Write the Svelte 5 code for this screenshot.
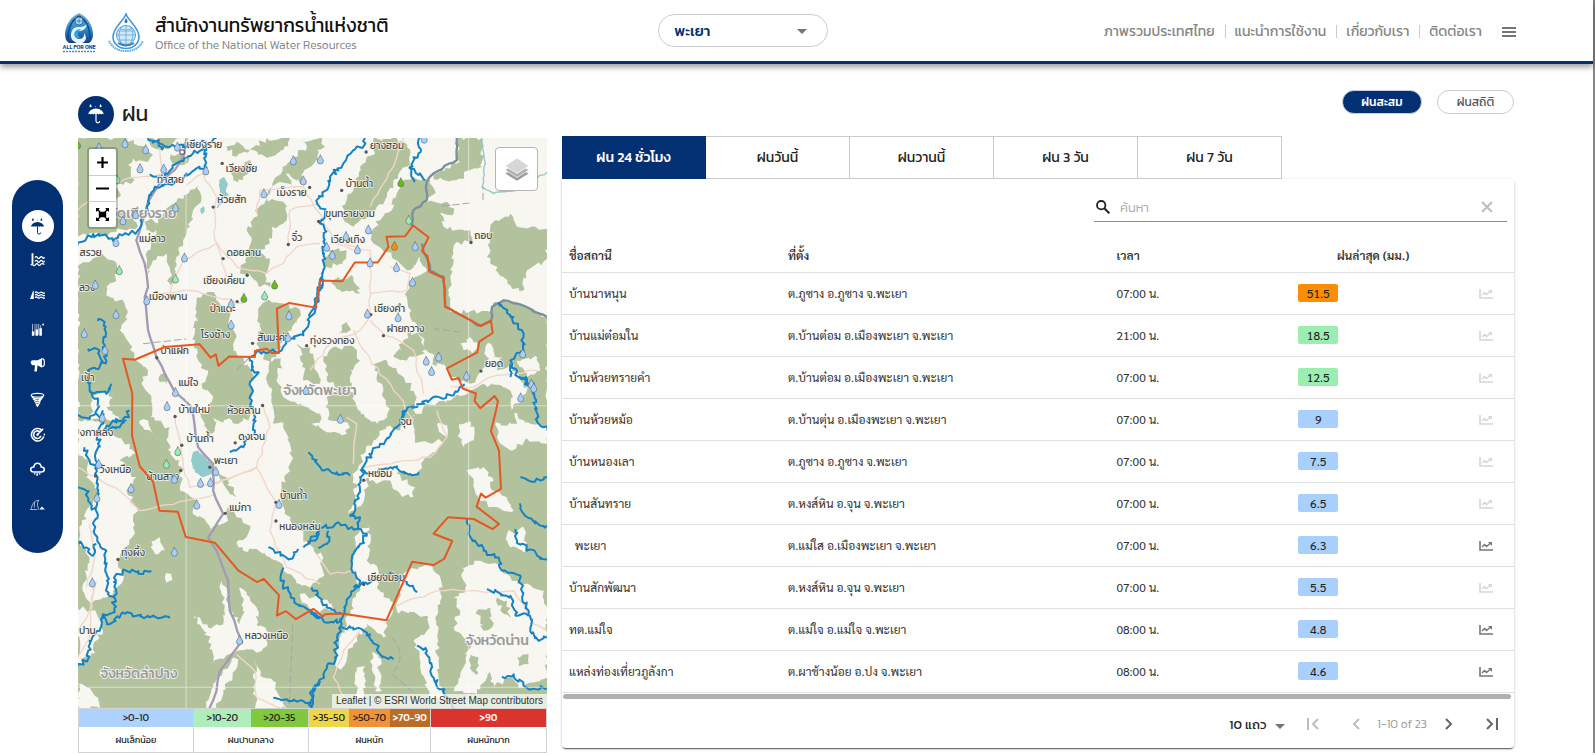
<script>
  const navLinks = ['ภาพรวมประเทศไทย', 'แนะนำการใช้งาน', 'เกี่ยวกับเรา', 'ติดต่อเรา'];
  const menu = ['ฝน', 'ระดับน้ำ', 'เขื่อน', 'คุณภาพน้ำ', 'ประกาศเตือน', 'พายุ', 'เรดาร์', 'คาดการณ์ฝน', 'คลื่น'];
  const tabs = ['ฝน 24 ชั่วโมง', 'ฝนวันนี้', 'ฝนวานนี้', 'ฝน 3 วัน', 'ฝน 7 วัน'];
  let activeTab = $state(0);
  let query = $state('');

  const rows = [
    { name: 'บ้านนาหนุน', place: 'ต.ภูซาง อ.ภูซาง จ.พะเยา', time: '07:00 น.', rain: '51.5', level: 'heavy', chart: false },
    { name: 'บ้านแม่ต๋อมใน', place: 'ต.บ้านต๋อม อ.เมืองพะเยา จ.พะเยา', time: '21:00 น.', rain: '18.5', level: 'medium', chart: false },
    { name: 'บ้านห้วยทรายคำ', place: 'ต.บ้านต๋อม อ.เมืองพะเยา จ.พะเยา', time: '07:00 น.', rain: '12.5', level: 'medium', chart: false },
    { name: 'บ้านห้วยหม้อ', place: 'ต.บ้านตุ่น อ.เมืองพะเยา จ.พะเยา', time: '07:00 น.', rain: '9', level: 'light', chart: false },
    { name: 'บ้านหนองเลา', place: 'ต.ภูซาง อ.ภูซาง จ.พะเยา', time: '07:00 น.', rain: '7.5', level: 'light', chart: false },
    { name: 'บ้านสันทราย', place: 'ต.หงส์หิน อ.จุน จ.พะเยา', time: '07:00 น.', rain: '6.5', level: 'light', chart: false },
    { name: '\u00a0 พะเยา', place: 'ต.แม่ใส อ.เมืองพะเยา จ.พะเยา', time: '07:00 น.', rain: '6.3', level: 'light', chart: true },
    { name: 'บ้านสักพัฒนา', place: 'ต.หงส์หิน อ.จุน จ.พะเยา', time: '07:00 น.', rain: '5.5', level: 'light', chart: false },
    { name: 'ทต.แม่ใจ', place: 'ต.แม่ใจ อ.แม่ใจ จ.พะเยา', time: '08:00 น.', rain: '4.8', level: 'light', chart: true },
    { name: 'แหล่งท่องเที่ยวภูลังกา', place: 'ต.ผาช้างน้อย อ.ปง จ.พะเยา', time: '08:00 น.', rain: '4.6', level: 'light', chart: true }
  ];

  // Adds small repeatable bends to a coarse line so that coasts and rivers look natural.
  function rough(points, amp, step, closed) {
    const p = points.split(' ').map((s) => s.split(',').map(Number));
    let seed = Math.abs(Math.round(p[0][0] * 31 + p[0][1] * 17 + p.length * 7)) + 1;
    const rnd = () => {
      seed = (seed * 16807) % 2147483647;
      return seed / 2147483647 - 0.5;
    };
    const out = [];
    const last = closed ? p.length : p.length - 1;
    for (let i = 0; i < last; i++) {
      const a = p[i];
      const b = p[(i + 1) % p.length];
      const n = Math.max(1, Math.round(Math.hypot(b[0] - a[0], b[1] - a[1]) / step));
      out.push(a);
      for (let k = 1; k < n; k++) {
        out.push([a[0] + ((b[0] - a[0]) * k) / n + rnd() * amp, a[1] + ((b[1] - a[1]) * k) / n + rnd() * amp]);
      }
    }
    if (!closed) out.push(p[p.length - 1]);
    return 'M' + out.map((q) => q.map((v) => v.toFixed(0)).join(' ')).join('L') + (closed ? 'Z' : '');
  }

  // The map is described in four quarters, each with its own origin.
  const quarters = [
    {
      x: 0, y: 840,
      base: [24, 20, 700, 900],
      land: ['225,-30 255,30 300,50 295,120 335,170 330,230 380,270 370,310 410,335 425,365 440,340 475,330 475,280 500,320 540,345 530,380 500,395 520,420 560,415 620,450 640,480 700,520 750,545 750,385 680,360 645,300 635,230 665,150 660,100 640,20 620,-30', '24,30 60,0 100,40 140,80 180,100 200,130 150,150 200,200 170,240 200,290 195,370 150,440 160,510 110,560 60,580 40,520 60,440 30,380 50,300 90,250 50,200 60,150 24,120', '245,390 270,380 285,420 255,430', '285,500 305,490 310,515 290,515', '455,510 470,530 480,600 510,640 520,590 510,530 560,590 560,640 605,665 575,720 500,720 430,755 425,700 370,610 415,650 440,640 460,640', '430,830 490,740 505,745 440,894 410,894', '24,590 80,600 100,660 60,740 24,760', '555,745 580,800 610,810 640,870 650,894 555,894', '24,810 60,830 90,880 90,894 24,894', '205,-20 235,30 250,70 220,50 210,20'],
      green: ['395,-10 430,20 435,60 415,70 400,30', '480,-10 525,-10 520,30 495,40 485,20', '555,415 620,450 640,480 610,490 520,440', '440,180 470,200 500,260 480,250']
    },
    {
      x: 720, y: 840,
      base: [-20, 10, 731, 890],
      land: ['-20,-30 65,-30 95,5 120,50 95,75 50,65 -20,30', '150,-25 235,-25 235,15 200,40 165,20', '130,200 160,130 190,90 240,45 270,60 285,-10 315,-10 315,98 365,100 385,85 400,95 340,150 320,190 260,190 315,230 310,260 270,250 240,210 200,220 175,200 165,250 140,290 115,310 140,230', '380,-10 420,-10 410,80 385,60', '435,20 480,-10 490,90 460,110', '470,180 520,170 545,200 540,230 590,260 610,300 540,290 510,270 490,220', '570,100 600,120 650,85 711,100 711,50 660,40 640,20 620,-20 555,-20 560,80', '145,350 175,350 180,400 170,450 205,480 200,530 240,570 250,600 220,680 170,640 130,700 95,780 75,760 100,650 120,600 150,540 125,470', '280,490 350,460 390,500 395,560 375,620 380,700 385,800 400,860 360,860 330,760 310,690 350,660 355,620 260,600', '455,470 510,450 560,460 580,490 635,520 700,540 711,590 711,800 640,830 600,800 550,830 540,780 500,850 430,840 450,800 480,690 430,650 450,600 430,560 465,540', '-30,390 10,410 40,440 35,500 0,530 -30,510', '-30,550 30,560 80,600 0,600', '590,370 640,350 650,420 600,410', '140,770 165,765 160,860 135,880', '185,720 205,740 215,840 195,840'],
      green: ['500,600 540,590 545,650 520,660', '620,740 655,730 655,760 625,765', '480,730 505,740 500,790 485,780', '560,560 590,570 600,620 570,600']
    },
    {
      x: 0, y: 0,
      land: [],
      green: ['24,24 170,24 230,50 250,75 235,95 190,85 175,105 195,150 160,165 140,160 150,200 130,240 190,262 205,290 140,305 110,318 60,310 24,320', '24,410 60,395 90,375 130,390 150,430 110,470 120,500 165,520 175,545 150,600 180,640 200,690 235,720 215,760 245,800 240,870 24,870', '385,165 395,200 370,240 360,290 340,330 320,380 310,440 298,475 300,420 290,370 250,390 235,430 230,380 240,330 260,300 230,300 225,270 245,265 265,280 290,235 330,205', '240,24 330,24 300,45 270,60 245,50', '300,85 330,70 360,80 350,100 310,100', '470,50 500,35 540,60 590,24 660,24 640,60 600,80 540,60 500,80', '480,120 540,90 540,120 520,150 490,150', '700,60 740,50 750,90 700,120 690,160 650,130 665,170 620,160 590,200 600,175 650,105', '590,205 640,215 650,250 640,280 605,290 600,340 570,360 600,385 585,430 600,470 570,470 545,440 510,430 530,380 545,330 530,300 560,260 555,240', '380,520 400,490 430,485 450,520 480,540 475,580 500,620 490,660 520,680 545,720 545,800 535,870 400,870 430,800 395,760 415,720 385,690 375,610', '565,535 600,510 640,520 690,540 665,600 630,640 620,680 590,690 560,640 575,600', '600,690 640,680 620,750 640,800 690,820 750,850 750,880 610,880 605,800 590,740', '680,640 720,650 750,760 700,750 700,700', '270,735 290,730 290,760 270,755']
    },
    {
      x: 720, y: 0,
      land: [],
      green: ['-20,30 30,24 45,50 20,70 -10,60', '190,24 260,24 300,60 290,110 250,150 230,200 200,230 180,260 130,290 95,260 110,200 140,160 150,110 195,70', '280,150 310,140 360,150 375,190 350,215 410,215 430,250 390,250 400,290 480,300 485,340 440,335 430,370 420,440 420,545 540,545 550,515 620,515 711,560 711,870 640,870 600,840 640,760 600,700 560,720 575,680 530,690 500,740 480,760 420,740 400,700 370,690 340,640 300,560 290,500 300,450 350,420 330,380 300,420 270,400 245,380 190,340 180,310 210,270 245,240 260,190', '370,130 440,100 440,24 515,24 515,110 480,120 440,150 380,150', '540,290 560,270 600,250 620,290 711,300 711,385 650,420 640,480 600,465 540,400 530,380 540,360 530,310', '40,690 70,650 130,650 150,690 120,720 130,800 150,850 140,870 60,870 50,800 75,770 50,740', '190,700 230,690 280,740 320,800 310,870 240,870 220,780', '250,680 300,600 330,620 345,670 290,690', '380,650 410,640 395,700 365,700', '340,830 470,790 520,760 600,780 620,880 330,880', '40,390 70,360 110,360 100,400 50,410', '60,450 130,440 150,490 90,480', '95,590 115,570 120,600 85,610']
    }
  ];
  const clearings = ['1170,640 1200,620 1220,650 1205,670 1180,660', '1340,690 1400,680 1410,720 1370,740', '1245,650 1262,640 1270,680 1250,680', '75,790 100,780 130,800 110,830 150,870 60,870 65,830', '1330,780 1370,770 1360,810 1320,820'];

  const roads = [
    '350,165 400,130 440,200 435,330 500,410 590,430 640,400 680,350 750,340', '24,240 160,150 280,130 270,60 250,24', '235,500 340,480 400,490 520,520', '300,490 340,390 440,340 470,440', '560,250 570,180 700,170 800,340 850,360', '655,340 660,240 750,220', '820,340 900,360 900,560 870,600 780,640 720,720', '900,490 1010,480 1020,430 960,410', '900,570 930,600 1030,660 1060,790', '850,600 905,700 960,760 1030,870', '900,230 970,110 1000,24', '316,860 340,1010 360,1070 440,1060 560,1010 600,890 580,820', '430,1060 560,1010 618,1115 600,1200 650,1310 750,1360', '24,1010 150,1080 210,1140 350,1110 440,1090', '50,1370 75,1280 60,1180', '500,1570 555,1620 560,1700 640,1735', '24,1580 60,1520 70,1360', '850,1000 860,880 830,860', '880,1010 1000,990 1080,980 1130,920 1100,840', '870,1500 820,1560 790,1640 830,1720', '980,1425 1100,1380 1330,1380 1390,1480 1431,1500', '1140,770 1210,770 1260,740 1400,720', '24,1500 60,1440 80,1350', '740,1270 780,1330 860,1320'
  ];
  const highway = ['350,24 345,70 315,120 270,160 235,215 215,285 200,330 225,400 235,470 225,500 235,600 260,680 315,785 365,830 385,950 430,1000 430,1080 460,1150 415,1220 440,1260 475,1350 480,1440 515,1530 450,1620 440,1680 418,1734'];
  const borderRivers = ['1160,24 1160,90 1090,130 1070,155 1070,210 1030,240 1025,290', '1055,340 1080,420 1120,440 1125,530 1231,587 1262,570 1265,530 1300,510 1340,520 1431,560'];
  const rivers = [
    '24,345 55,315 110,315 130,332 150,312 200,308 215,285 235,215 255,170 330,150 380,115 410,112 405,60 440,24', '240,135 280,145 320,100 370,70 410,50', '235,24 270,40 320,50 410,38', '270,30 275,60', '755,440 745,500 720,560 700,615 650,620 635,660 560,665 540,690 545,720 565,725 540,755 550,870 555,900 520,950 480,965', '85,572 105,575 100,650 110,690 80,715 55,720 60,780 85,815 80,850 100,870', '55,655 90,660 95,700', '60,780 110,790 125,760', '24,850 60,865 80,850', '170,870 130,870 100,900',
    '885,24 880,50 850,60 820,100 780,140 770,180 740,210 765,250 750,280 765,300 760,420 750,480 725,560', '1050,24 1045,70 1020,110 1065,150', '1020,110 1030,155', '1285,515 1320,560 1360,610 1360,660 1320,690 1345,740 1390,760 1400,870 1431,900', '1320,700 1320,740', '1345,740 1375,765', '995,870 1010,835 1070,810 1150,795 1180,760', '1462,180 1450,200',
    '100,840 85,940 80,1000 85,1060 80,1130 75,1210 90,1240 110,1260 115,1390 135,1400 130,1445 100,1450 90,1500 60,1530 55,1585 24,1605', '24,1070 50,1080 65,1130 80,1130', '30,1230 70,1275 80,1240', '135,1400 140,1330 170,1320 220,1330 245,1320', '100,1450 120,1480 160,1445 200,1455 300,1462', '180,840 150,890 100,900', '45,950 60,990 85,1015', '595,1250 620,1265 660,1285 685,1255', '700,1250 735,1230 745,1200', '640,1310 632,1350 680,1420 750,1460', '715,965 760,1020 800,1025 840,1035', '610,1700 650,1705 700,1710 725,1730 725,1680 750,1650', '725,1370 770,1430 815,1450',
    '1010,840 990,880 930,940 890,990 870,1040 855,1140 840,1155 870,1160 860,1195 890,1215 870,1240 850,1270 845,1305 870,1350 850,1380 825,1430 815,1480 800,1520 795,1580 760,1630 730,1670 720,1720', '870,1020 920,1025 970,1010 1020,1030 1045,1025', '860,1195 810,1180 760,1190 720,1230', '775,1200 770,1240 745,1252', '850,1370 920,1345 970,1330 1010,1360 1040,1385', '1190,1165 1195,1210 1240,1260 1285,1280 1295,1320 1350,1335 1355,1400 1375,1440 1380,1490 1405,1530 1431,1520', '1250,1375 1320,1395 1335,1450 1375,1455', '1350,1040 1380,1052 1431,1040', '1348,1118 1360,1150 1410,1185 1431,1185', '1335,1195 1340,1230 1400,1275 1431,1285', '1040,1545 1070,1560 1090,1640 1130,1700 1150,1731', '720,1440 770,1475 815,1470', '810,1490 840,1490 900,1510 930,1570 970,1585', '1295,1637 1330,1630 1375,1675 1431,1670'
  ];
  const lakes = ['448,150 462,140 474,160 468,185 478,195 460,205 450,185', '370,965 385,960 430,1005 430,1030 400,1040 375,1025 363,990', '392,235 402,228 404,245 396,252', '440,235 452,212 456,222'];
  const boundary = '160,685 195,688 285,650 390,642 422,682 438,672 446,706 478,678 555,680 555,662 590,655 605,668 627,668 621,535 658,518 737,532 751,451 817,453 854,397 923,397 955,350 949,320 1005,318 1029,286 1075,321 1055,362 1072,378 1077,424 1121,444 1124,528 1231,587 1262,572 1267,608 1227,634 1221,666 1130,714 1145,748 1165,743 1177,774 1217,789 1213,812 1230,833 1273,797 1283,812 1277,840 1262,902 1286,960 1292,1075 1246,1101 1232,1089 1219,1128 1286,1180 1267,1195 1210,1165 1133,1160 1090,1209 1146,1231 1122,1284 1090,1303 1026,1293 949,1468 815,1448 765,1450 758,1457 730,1434 678,1465 648,1441 621,1454 627,1393 581,1344 562,1354 505,1319 435,1236 348,1219 324,1143 269,1140 250,1053 210,1007 187,916 188,790';

  const towns = [
    ['เชียงราย', 350, 55], ['เวียงชัย', 468, 125], ['ท่าสาย', 262, 158], ['เม็งราย', 620, 198], ['ห้วยสัก', 442, 220], ['แม่ลาว', 208, 334], ['จิ๋ว', 665, 332], ['ดอยลาน', 470, 376], ['เชียงเคี่ยน', 400, 462], ['เมืองพาน', 238, 508], ['ป่าแดะ', 420, 545], ['โรงช้าง', 393, 623], ['สันมะค่า', 562, 632], ['ทุ่งรวงทอง', 720, 640], ['ป่าแฝก', 272, 671], ['แม่ใจ', 326, 767], ['บ้านใหม่', 326, 847], ['ห้วยลาน', 472, 852],
    ['ยางฮอม', 900, 58], ['บ้านต้ำ', 827, 172], ['ขุนทรายงาม', 766, 262], ['เวียงเทิง', 782, 337], ['ถอบ', 1212, 326], ['เชียงคำ', 912, 545], ['ฝายกวาง', 950, 606], ['ยอด', 1244, 710], ['จุน', 990, 884],
    ['บ้านถ้ำ', 350, 935], ['ดงเจน', 505, 928], ['พะเยา', 432, 1000], ['วังเหนือ', 90, 1026], ['บ้านสาง', 230, 1048], ['แม่กา', 478, 1140], ['บ้านถ้ำ', 630, 1105], ['หนองหล่ม', 628, 1197], ['ทุ่งผึ้ง', 155, 1276], ['หลวงเหนือ', 525, 1524], ['หม่อม', 894, 1040], ['เชียงม่วน', 892, 1352],
    ['สรวย', 30, 376], ['ลวง', 28, 482], ['เป้า', 34, 752], ['งกาหลง', 30, 915], ['ปาน', 28, 1510]
  ];
  const provinces = [['หวัดเชียงราย', 96, 264], ['จังหวัดพะเยา', 640, 795], ['จังหวัดลำปาง', 92, 1642], ['จังหวัดน่าน', 1186, 1542]];
  const dots = [[457, 100], [430, 231], [719, 172], [655, 343], [460, 385], [532, 435], [502, 514], [548, 639], [710, 646], [261, 682], [316, 858], [578, 825], [888, 66], [815, 181], [746, 274], [1202, 337], [902, 553], [940, 616], [1232, 722], [336, 944], [496, 937], [420, 1010], [78, 1036], [333, 1020], [466, 1148], [618, 1115], [618, 1171], [145, 1286], [515, 1533], [881, 1049], [881, 1361]];

  const stations = {
    light: [[88, 52], [166, 40], [228, 58], [323, 50], [211, 115], [282, 116], [408, 121], [670, 91], [700, 151], [582, 190], [317, 232], [198, 253], [160, 271], [139, 336], [344, 382], [77, 463], [231, 510], [139, 552], [484, 520], [484, 583], [657, 555], [654, 621], [44, 609], [106, 659], [317, 785], [708, 779], [292, 827], [98, 861], [751, 88], [1062, 26], [828, 318], [895, 298], [770, 350], [787, 374], [862, 358], [900, 397], [1035, 348], [979, 411], [1027, 455], [892, 550], [984, 561], [1105, 679], [1068, 691], [1084, 722], [1189, 736], [1357, 669], [1383, 760], [1390, 772], [1351, 801], [811, 865], [87, 1000], [184, 1073], [82, 1101], [314, 1045], [438, 1022], [392, 1057], [422, 1055], [381, 1122], [627, 1120], [314, 1263], [68, 1355], [509, 1528]],
    medium: [[142, 148], [149, 420], [317, 445], [584, 496], [1016, 269], [324, 962], [290, 1000]],
    strong: [[24, 43], [614, 463], [522, 503], [992, 157]],
    heavy: [[973, 347]]
  };
  const dropFill = { light: '#a6cffc', medium: '#9bedae', strong: '#66bf0d', heavy: '#ff8c00' };
</script>

{#snippet umbrella()}
  <path d="M2.500 12.500Q4 6 12 5.500q8 .5 9.500 7-1.600-1.400-3.200 0-1.600-1.400-3.200 0-1.500-1.400-3.100 0-1.600-1.400-3.100 0-1.600-1.400-3.200 0-1.600-1.400-3.200 0z" fill="currentColor" />
  <path d="M12 11.500v9q0 2.200 2.200 2.200t2.200-2.200" fill="none" stroke="currentColor" stroke-width="1.400" />
  <path d="M5.500 0q-2.600 4 0 4t0-4M11.500 2q-1 2 0 2t0-2M17.500 0q-2.600 4 0 4t0-4" fill="currentColor" stroke="none" />
{/snippet}

{#snippet glyph(i)}
  <svg viewBox="0 0 24 24" aria-hidden="true" fill="none" stroke="currentColor" stroke-width={i === 0 ? 0 : 1.5}>
    {#if i === 0}
      {@render umbrella()}
    {:else if i === 1}
      <path d="M4 2v18" stroke-width="3" />
      <path d="M8 9q2-3 4 0t4 0 4 0 3-1M8 15q2-3 4 0t4 0 4 0 3-1M1 21q2-2 4 0t4-1 4 0 4 0 6 0" stroke-width="2" />
    {:else if i === 2}
      <path d="M0 19 5 6h1v13z" fill="currentColor" stroke="none" />
      <path d="M8 9q2-2 4 0t4 0 4 0 4 0M8 13q2-2 4 0t4 0 4 0 4 0M8 17q2-2 4 0t4 0 4 0 4 0" stroke-width="2" />
    {:else if i === 3}
      <path d="M4 3v17M8 3v17M11 3v14M14 3v17M17 5v15" stroke-width="1" />
      <path d="M3 15h4v7H3zM9 12h4v10H9zM15 10h4v12h-4z" fill="currentColor" stroke="none" />
      <circle cx="21" cy="4" r="1.500" fill="currentColor" stroke="none" />
    {:else if i === 4}
      <path d="M1 8q0-3 4-3h7l7-3v15l-7-4-1 10H7l1-10H4q-3-1-3-5z" fill="currentColor" stroke="none" />
      <ellipse cx="20" cy="9" rx="3" ry="6" stroke-width="2" />
    {:else if i === 5}
      <ellipse cx="12" cy="5" rx="10" ry="3" stroke-width="2" />
      <path d="M3 7q2 4 9 4t9-4M5 11q2 3 7 3t7-4M7 15q2 2 5 2t5-3M9 18q1 2 3 2t4-3M10 20l2 3 2-4" stroke-width="2" />
    {:else if i === 6}
      <path d="M19 5A10 10 0 1 0 22 15" stroke-width="2.500" />
      <path d="M16 8a6 6 0 1 0 1.500 6M12 12l9-9" stroke-width="2.500" />
      <circle cx="12" cy="12.500" r="2" fill="currentColor" stroke="none" />
      <circle cx="23" cy="12" r="1.500" fill="currentColor" stroke="none" />
    {:else if i === 7}
      <path d="M6 16q-5 0-5-4t5-4q1-6 6-6t6 6q5 0 5 4t-5 4z" stroke-width="2.500" />
      <path d="M8 18l-1 2M12 18l-1 4M16 18l-1 2" stroke-width="2.500" />
    {:else}
      <path d="M0 20h12M2 19Q4 6 14 5q-3 4-2 9l2 6M7 8v9" stroke-width="1" />
      <path d="M15 20l4-5 2 2 3 3z" fill="currentColor" stroke="none" />
    {/if}
  </svg>
{/snippet}

<div class="page">
  <header class="topbar">
    <div class="brand">
      <svg class="logo" viewBox="0 0 36 40" role="img" aria-label="All for one">
        <defs>
          <linearGradient id="arch" x1="0" y1="0" x2="0" y2="1"><stop offset="0" stop-color="#7fb2d2" /><stop offset=".5" stop-color="#2f8fcb" /><stop offset="1" stop-color="#123f86" /></linearGradient>
        </defs>
        <path d="M18 0C9 4 4 13 4 22q0 5 4 8h20q4-3 4-8C32 13 27 4 18 0z" fill="url(#arch)" />
        <path d="M18 3Q7 9 7 26M18 3q11 6 11 23" fill="none" stroke="#14488c" stroke-width="1.500" />
        <circle cx="18" cy="8" r="4" fill="#b7d6ea" stroke="#2c74b1" />
        <path d="M15.500 8h5M18 5.500v5" stroke="#2c74b1" stroke-width=".8" />
        <path d="M10 21q1-8 9-7 5 0 7-3-1 6-7 7-5 0-5 4t5 4q5-1 4-6 4 5 0 9-5 3-9 0-5-3-4-8z" fill="#e9f6fd" />
        <path d="M13 22q0-6 7-6-4 3-3 6t3 3q-5 1-7-3z" fill="#2ea5dc" />
        <text x="18" y="36" text-anchor="middle" font-size="5.500" font-weight="600" fill="#1a4e93">ALL FOR ONE</text>
        <path d="M2 38.500h32" stroke="#5d85b7" stroke-width="1.500" stroke-dasharray="2 1" />
      </svg>
      <svg class="logo" viewBox="0 0 36 40" role="img" aria-label="สทนช.">
        <path d="M18 1C15 9 5 14 5 24a13 11.500 0 0 0 26 0C31 14 21 9 18 1z" fill="#fff" stroke="#4098d8" stroke-width="1.600" />
        <circle cx="18" cy="22" r="9.500" fill="#d4e9f8" stroke="#4f9fd9" />
        <path d="M9 18h18M9 22h18M10 27h16M18 12v20M14 13q-6 9 0 18M22 13q6 9 0 18M11 15q7 4 14 0" fill="none" stroke="#69afe0" stroke-width=".9" />
        <path d="M18 5q-3 5 0 5t0-5z" fill="#2175ba" />
        <path d="M10 30q8 5 16 0" fill="none" stroke="#2b7fc6" stroke-width="2" />
        <path d="M1 28q5 10 17 10t17-10" fill="none" stroke="#5aa7de" stroke-width="2" stroke-dasharray="1.500 .7" />
      </svg>
      <div class="name">
        <strong>สำนักงานทรัพยากรน้ำแห่งชาติ</strong>
        <span>Office of the National Water Resources</span>
      </div>
    </div>
    <div class="province">
      <select aria-label="จังหวัด"><option>พะเยา</option></select>
      <svg viewBox="0 0 10 5" aria-hidden="true"><path d="M0 0h10L5 5z" fill="#757575" /></svg>
    </div>
    <nav class="links" aria-label="เมนูหลัก">
      {#each navLinks as link}<a href="#top">{link}</a>{/each}
      <button class="burger" aria-label="เมนู"><svg viewBox="0 0 14 10"><path d="M0 1h14M0 5h14M0 9h14" stroke="#757575" stroke-width="2" /></svg></button>
    </nav>
  </header>

  <div class="body">
    <aside class="rail">
      {#each menu as item, i}
        <a href="#top" class:active={i === 0} aria-label={item}>{@render glyph(i)}</a>
      {/each}
    </aside>

    <main>
      <section class="left">
        <h1><span class="round"><svg viewBox="0 0 24 24" aria-hidden="true">{@render umbrella()}</svg></span>ฝน</h1>
        <div class="map">
          <svg class="canvas" viewBox="24 24 1407 1707" preserveAspectRatio="xMidYMid slice" role="img" aria-label="แผนที่ฝนจังหวัดพะเยา">
            <rect x="24" y="24" width="1407" height="1710" fill="#f7f6f1" />
            {#each quarters as q}
              <g transform="translate({q.x} {q.y})">
                {#if q.base}<rect x={q.base[0]} y={q.base[1]} width={q.base[2]} height={q.base[3]} fill="#b2c29d" />{/if}
                {#each q.land as p}<path d={rough(p, 16, 11, true)} fill="#f7f6f1" />{/each}
                {#each q.green as p}<path d={rough(p, 16, 11, true)} fill="#b2c29d" />{/each}
              </g>
            {/each}
            {#each clearings as p}<path d={rough(p, 14, 10, true)} fill="#f7f6f1" />{/each}
            {#each lakes as p}<path d={rough(p, 4, 8, true)} fill="#92cbcb" />{/each}
            <path d={rough('1235,24 1245,100 1235,170 1270,190 1350,180 1431,125', 6, 12, false)} class="stream" />
            {#each roads as p}<path d={rough(p, 8, 22, false)} class="road" />{/each}
            {#each highway as p}<path d={rough(p, 4, 30, false)} class="highway" />{/each}
            <path d="M220 640 350 626M1115 228l90-10M1238 210v-40M500 720l45-45M1170 605l-80-10M668 1480l-10 250M965 1520q50 50 0 110l60 50" class="dash" />
            {#each borderRivers as p}<path d={rough(p, 6, 14, false)} class="border" />{/each}
            {#each rivers as p}<path d={rough(p, 14, 8, false)} class="river" />{/each}
            <path d="M349 24v1710M1195 24v1710M24 826h1407M24 1669h1407" stroke="#fff" stroke-opacity=".5" stroke-width="3" />
            {#each dots as d}<circle cx={d[0]} cy={d[1]} r="5" fill="#555" />{/each}
            <circle cx="337" cy="66" r="7" fill="#fff" stroke="#555" stroke-width="3" />
            {#each provinces as t}<text x={t[1]} y={t[2]} class="prov">{t[0]}</text>{/each}
            {#each towns as t}<text x={t[1]} y={t[2]} class="town">{t[0]}</text>{/each}
            <polygon points={boundary} fill="none" stroke="#e65722" stroke-width="6" stroke-linejoin="round" />
            {#each Object.entries(stations) as [level, list]}
              {#each list as s}
                <path transform="translate({s[0]} {s[1]})" d="M0-14C2-7 9-1 9 5a9 8.500 0 0 1-18 0C-9-1-2-7 0-14z" fill={dropFill[level]} stroke="#5f6b78" stroke-width="2" />
              {/each}
            {/each}
          </svg>
          <div class="zoom">
            <button aria-label="ซูมเข้า"><svg viewBox="0 0 12 12"><path d="M6 1v10M1 6h10" stroke="#000" stroke-width="2" /></svg></button>
            <button aria-label="ซูมออก"><svg viewBox="0 0 12 12"><path d="M0 6h12" stroke="#000" stroke-width="2" /></svg></button>
            <button aria-label="เต็มจอ"><svg viewBox="0 0 14 14"><path d="M0 0h4L3 2l2 2-1 1-2-2-2 1zM14 0v4l-2-1-2 2-1-1 2-2-1-2zM0 14v-4l2 1 2-2 1 1-2 2 1 2zM14 14h-4l1-2-2-2 1-1 2 2 2-1z" /><rect x="3" y="4" width="8" height="6" rx="1" /></svg></button>
          </div>
          <button class="layers" aria-label="ชั้นข้อมูล">
            <svg viewBox="0 0 26 26">
              <path d="M1 17.500 13 11l12 6.500L13 25z" fill="#9a9a9a" stroke="#fff" stroke-width=".5" />
              <path d="M1 14 13 7l12 7-12 7.500z" fill="#b0b0b0" stroke="#fff" stroke-width=".7" />
              <path d="M1 10 13 2l12 8-12 7.500z" fill="#d6d6d6" stroke="#fff" stroke-width=".7" />
            </svg>
          </button>
          <div class="credit"><a href="#top">Leaflet</a> | © ESRI World Street Map contributors</div>
        </div>
        <table class="legend">
          <colgroup><col class="w1" /><col class="w2" /><col class="w2" /><col class="w3" /><col class="w3" /><col class="w3" /><col /></colgroup>
          <tbody>
            <tr class="scale"><td class="c0 edge">&gt;0-10</td><td class="c1 edge">&gt;10-20</td><td class="c2">&gt;20-35</td><td class="c3 edge">&gt;35-50</td><td class="c4">&gt;50-70</td><td class="c5">&gt;70-90</td><td class="c6 edge">&gt;90</td></tr>
            <tr class="words"><td class="edge">ฝนเล็กน้อย</td><td class="edge" colspan="2">ฝนปานกลาง</td><td class="edge" colspan="3">ฝนหนัก</td><td class="edge">ฝนหนักมาก</td></tr>
          </tbody>
        </table>
      </section>

      <section class="right">
        <div class="modes"><button class="on">ฝนสะสม</button><button>ฝนสถิติ</button></div>
        <div class="tabs">
          {#each tabs as tab, i}<button class:on={activeTab === i} onclick={() => (activeTab = i)}>{tab}</button>{/each}
        </div>
        <div class="card">
          <div class="tools">
            <div class="search">
              <svg viewBox="0 0 14 14" aria-hidden="true"><circle cx="5.200" cy="5.200" r="4.200" fill="none" stroke="#222" stroke-width="1.800" /><path d="m8.300 8.300 5 5" stroke="#222" stroke-width="2" /></svg>
              <input aria-label="ค้นหา" placeholder="ค้นหา" bind:value={query} />
              <button aria-label="ล้าง" onclick={() => (query = '')}><svg viewBox="0 0 12 12"><path d="m1 1 10 10M11 1 1 11" stroke="#bdbdbd" stroke-width="2" /></svg></button>
            </div>
          </div>
          <table class="data">
            <colgroup><col class="d1" /><col class="d2" /><col class="d3" /><col class="d4" /><col /></colgroup>
            <thead><tr><th>ชื่อสถานี</th><th>ที่ตั้ง</th><th>เวลา</th><th class="mid">ฝนล่าสุด (มม.)</th><th></th></tr></thead>
            <tbody>
              {#each rows as r}
                <tr>
                  <td>{r.name}</td><td>{r.place}</td><td>{r.time}</td>
                  <td><span class="badge {r.level}">{r.rain}</span></td>
                  <td class="icon"><button aria-label="กราฟ" disabled={!r.chart}><svg viewBox="0 0 14 10"><path d="M1 0v9h13" fill="none" stroke="currentColor" stroke-width="1.600" /><path d="m3 6 2.500-2.500 2 2L11 2.500" fill="none" stroke="currentColor" stroke-width="1.500" /><path d="M9 1h4v4z" fill="currentColor" /></svg></button></td>
                </tr>
              {/each}
            </tbody>
          </table>
          <div class="bar"></div>
          <div class="pager">
            <div class="size"><select aria-label="จำนวนแถว"><option>10 แถว</option></select><svg viewBox="0 0 10 5" aria-hidden="true"><path d="M0 0h10L5 5z" fill="#757575" /></svg></div>
            <button disabled aria-label="หน้าแรก"><svg viewBox="0 0 12 12"><path d="M1 0v12M11 1 6 6l5 5" /></svg></button>
            <button disabled aria-label="ก่อนหน้า"><svg viewBox="0 0 12 12"><path d="M8 1 3 6l5 5" /></svg></button>
            <span>1-10 of 23</span>
            <button aria-label="ถัดไป"><svg viewBox="0 0 12 12"><path d="m4 1 5 5-5 5" /></svg></button>
            <button aria-label="หน้าสุดท้าย"><svg viewBox="0 0 12 12"><path d="m1 1 5 5-5 5M11 0v12" /></svg></button>
          </div>
        </div>
      </section>
    </main>
  </div>
</div>

<style>
  :global(body) { margin: 0; background: #fff; }
  .page {
    box-sizing: border-box;
    border-right: 2px solid #858585;
    font-family: Kanit, "Noto Sans Thai", "Open Sans", sans-serif;
    font-size: 14px;
    color: #222;
  }
  button, input, select { font: inherit; color: inherit; border: 0; background: none; padding: 0; margin: 0; }
  button { cursor: pointer; }
  a { color: inherit; text-decoration: none; }
  svg { display: block; }

  .topbar { box-sizing: border-box; height: 64px; border-bottom: 3px solid #033072; box-shadow: 0 3px 6px rgba(0, 0, 0, .4); display: grid; grid-template-columns: minmax(0, 13fr) 170px minmax(0, 15fr); align-items: center; padding: 0 77px 0 61px; column-gap: 10px; }
  .brand { display: flex; align-items: center; gap: 11px; padding-top: 5px; }
  .logo { width: 36px; height: 40px; flex: none; }
  .name { display: flex; flex-direction: column; }
  .name strong { font-weight: 400; font-size: 19px; line-height: 24px; color: #111; white-space: nowrap; }
  .name span { font-size: 12px; line-height: 14px; color: #858585; font-weight: 300; white-space: nowrap; }
  .province { position: relative; }
  .province select { appearance: none; width: 100%; height: 33px; border: 1px solid #ccc; border-radius: 17px; padding: 0 15px; color: #033072; font-size: 15px; font-weight: 500; }
  .province svg { position: absolute; right: 21px; top: 15px; width: 10px; height: 5px; pointer-events: none; }
  .links { display: flex; justify-content: flex-end; align-items: center; color: #858585; white-space: nowrap; padding-top: 2px; }
  .links a + a { border-left: 1px solid #ccc; margin-left: 10px; padding-left: 9px; line-height: 13px; }
  .burger { margin-left: 20px; }
  .burger svg { width: 14px; height: 10px; }

  .body { display: flex; align-items: flex-start; gap: 15px; padding: 0 79px 0 12px; }
  .rail { box-sizing: border-box; width: 51px; height: 373px; margin-top: 116px; padding-top: 30px; border-radius: 26px; background: #033072; display: flex; flex-direction: column; align-items: center; flex: none; color: #fff; }
  .rail a { width: 32px; height: 35px; display: flex; align-items: center; justify-content: center; }
  .rail a.active { height: 32px; border-radius: 50%; background: #fff; color: #033072; }
  .rail svg { width: 15px; height: 15px; }
  .rail a.active svg { width: 17px; height: 17px; }

  main { flex: 1; min-width: 0; display: grid; grid-template-columns: minmax(0, 469fr) minmax(0, 952fr); column-gap: 15px; }
  h1 { margin: 32px 0 6px; height: 36px; display: flex; align-items: center; gap: 8px; font-size: 21px; line-height: 34px; font-weight: 400; }
  .round { width: 36px; height: 36px; border-radius: 50%; background: #033072; color: #fff; display: flex; align-items: center; justify-content: center; }
  .round svg { width: 20px; height: 20px; }

  .map { position: relative; overflow: hidden; }
  .canvas { width: 100%; aspect-ratio: 469 / 570; }
  .river { fill: none; stroke: #1483c4; stroke-width: 6; stroke-linejoin: round; }
  .border { fill: none; stroke: #7a909b; stroke-width: 7; stroke-linejoin: round; }
  .stream { fill: none; stroke: #8fc9c9; stroke-width: 4; }
  .road { fill: none; stroke: #f1d6c8; stroke-width: 4; }
  .highway { fill: none; stroke: #a39bb4; stroke-width: 7; }
  .dash { fill: none; stroke: #a7a5a5; stroke-width: 3; stroke-dasharray: 22 9; }
  .town { font-size: 30px; fill: #4a4a4a; stroke: #f7f6f1; stroke-width: 4; paint-order: stroke; }
  .prov { font-size: 42px; font-weight: 500; fill: #999; stroke: #f7f6f1; stroke-width: 5; paint-order: stroke; }
  .zoom { position: absolute; left: 9px; top: 9px; border: 2px solid rgba(0, 0, 0, .2); border-radius: 4px; display: flex; flex-direction: column; background-clip: padding-box; overflow: hidden; }
  .zoom button { width: 27px; height: 26px; background: #fff; display: flex; align-items: center; justify-content: center; }
  .zoom button + button { border-top: 1px solid #ccc; }
  .zoom svg { width: 13px; height: 13px; }
  .layers { position: absolute; right: 9px; top: 9px; box-sizing: border-box; width: 43px; height: 44px; border: 1px solid #b5b5b5; border-radius: 4px; background: #fff; display: flex; align-items: center; justify-content: center; }
  .layers svg { width: 26px; height: 26px; }
  .credit { position: absolute; right: 0; bottom: 0; padding: 0 4px; background: rgba(255, 255, 255, .7); font: 10px/14px "Liberation Sans", sans-serif; color: #333; white-space: nowrap; }

  .legend { width: 100%; table-layout: fixed; border-collapse: collapse; border: 1px solid #d3d3d3; font-size: 10px; text-align: center; }
  .legend td { padding: 0; white-space: nowrap; }
  .legend .edge { border-left: 1px solid #d3d3d3; }
  .scale td { height: 18px; line-height: 18px; }
  .words td { height: 25px; font-size: 9px; }
  .w1 { width: 24.5%; } .w2 { width: 12.3%; } .w3 { width: 8.7%; }
  .c0 { background: #aed2fd; } .c1 { background: #afedba; } .c2 { background: #80c83c; } .c3 { background: #efd648; } .c4 { background: #f09337; }
  .c5 { background: #bd6c28; color: #fff; font-weight: 500; } .c6 { background: #db342e; color: #fff; font-weight: 500; }

  .right { padding-top: 26px; }
  .modes { display: flex; justify-content: flex-end; gap: 15px; }
  .modes button { box-sizing: border-box; width: 77px; height: 24px; border: 1px solid #ccc; border-radius: 12px; font-size: 12px; color: #555; }
  .modes .on { background: #033072; border-color: #c8d0dc; color: #fff; font-weight: 500; width: 80px; }
  .tabs { display: flex; margin-top: 22px; }
  .tabs button { box-sizing: border-box; flex: 0 1 144px; height: 43px; border: 1px solid #ccc; border-left: 0; font-size: 14px; white-space: nowrap; }
  .tabs .on { background: #033072; border-color: #033072; color: #fff; font-weight: 500; }
  .card { border-radius: 0 4px 4px 4px; box-shadow: 0 2px 1px -1px rgba(0, 0, 0, .55), 0 1px 3px rgba(0, 0, 0, .25); }
  .tools { display: flex; justify-content: flex-end; padding: 14px 7px 0; }
  .search { box-sizing: border-box; width: 413px; height: 29px; border-bottom: 1px solid #8c8c8c; display: flex; align-items: center; gap: 10px; padding: 0 14px 0 2px; }
  .search > svg { width: 14px; height: 14px; }
  .search input { flex: 1; min-width: 0; outline: 0; font-size: 13px; font-weight: 300; }
  .search input::placeholder { color: #aaa; opacity: 1; }
  .search button svg { width: 12px; height: 12px; }
  .data { width: 100%; table-layout: fixed; border-collapse: collapse; font-family: Sarabun, "Noto Sans Thai", "Open Sans", sans-serif; font-size: 12px; color: #333; }
  .d1 { width: 23%; } .d2 { width: 34.5%; } .d3 { width: 19.1%; } .d4 { width: 17.2%; }
  .data th { height: 50px; padding: 0 7px; text-align: left; font-weight: 600; vertical-align: bottom; line-height: 34px; border-bottom: 1px solid #e0e0e0; box-sizing: border-box; }
  .data th.mid { text-align: center; }
  .data td { box-sizing: border-box; height: 42px; padding: 0 7px; border-bottom: 1px solid #e0e0e0; white-space: pre; }
  .badge { display: block; width: 40px; height: 18px; line-height: 18px; border-radius: 2px; text-align: center; color: #222; }
  .light { background: #a9cffd; } .medium { background: #9bedb0; } .heavy { background: #ff8c05; }
  .data .icon button { display: block; margin-left: auto; margin-right: 14px; padding-top: 2px; color: #777; }
  .data .icon button:disabled { color: #d6d6d6; }
  .data .icon svg { width: 14px; height: 10px; }
  .bar { height: 5px; margin: 1px 3px 0 1px; border-radius: 3px; background: #b0b0b0; }
  .pager { box-sizing: border-box; height: 49px; display: flex; align-items: center; justify-content: flex-end; padding: 2px 16px 0 0; }
  .pager button svg { width: 12px; height: 12px; fill: none; stroke: #666; stroke-width: 2; }
  .pager button:disabled svg { stroke: #bdbdbd; }
  .pager span { margin: 0 15px 0 14px; font-size: 12px; color: #999; font-weight: 300; }
  .pager button:last-child, .pager button:disabled + button:disabled { margin-left: 32px; }
  .size { position: relative; margin-right: 22px; }
  .size select { appearance: none; width: 56px; font-size: 13px; }
  .size svg { position: absolute; right: 0; top: 50%; width: 10px; height: 5px; pointer-events: none; }
</style>
